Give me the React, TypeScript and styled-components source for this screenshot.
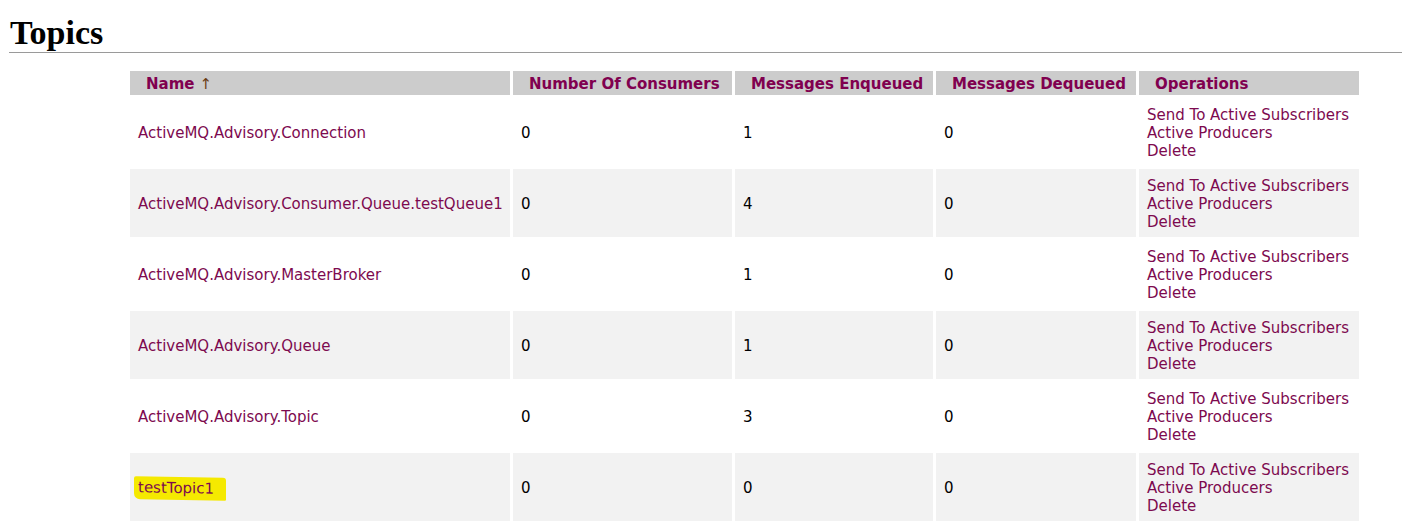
import React from "react";
import styled, { createGlobalStyle } from "styled-components";

type Topic = {
  name: string;
  consumers: number;
  enqueued: number;
  dequeued: number;
  marked?: boolean;
};

const topics: Topic[] = [
  { name: "ActiveMQ.Advisory.Connection", consumers: 0, enqueued: 1, dequeued: 0 },
  { name: "ActiveMQ.Advisory.Consumer.Queue.testQueue1", consumers: 0, enqueued: 4, dequeued: 0 },
  { name: "ActiveMQ.Advisory.MasterBroker", consumers: 0, enqueued: 1, dequeued: 0 },
  { name: "ActiveMQ.Advisory.Queue", consumers: 0, enqueued: 1, dequeued: 0 },
  { name: "ActiveMQ.Advisory.Topic", consumers: 0, enqueued: 3, dequeued: 0 },
  { name: "testTopic1", consumers: 0, enqueued: 0, dequeued: 0, marked: true },
];

const operations = ["Send To Active Subscribers", "Active Producers", "Delete"];

const App: React.FC = () => {
  return (
    <Page>
      <GlobalStyle />
      <Title>Topics</Title>
      <Table>
        <HeadRow>
          <HeadCell>
            Name <SortArrow>↑</SortArrow>
          </HeadCell>
          <HeadCell>Number Of Consumers</HeadCell>
          <HeadCell>Messages Enqueued</HeadCell>
          <HeadCell>Messages Dequeued</HeadCell>
          <HeadCell>Operations</HeadCell>
        </HeadRow>
        {topics.map((t, i) => (
          <Row key={t.name} $shaded={i % 2 === 1}>
            <Cell>
              {t.marked ? (
                <Marker>
                  <TopicLink>{t.name}</TopicLink>
                </Marker>
              ) : (
                <TopicLink>{t.name}</TopicLink>
              )}
            </Cell>
            <Cell>{t.consumers}</Cell>
            <Cell>{t.enqueued}</Cell>
            <Cell>{t.dequeued}</Cell>
            <OpsCell>
              {operations.map((op) => (
                <TopicLink key={op}>{op}</TopicLink>
              ))}
            </OpsCell>
          </Row>
        ))}
      </Table>
    </Page>
  );
};

export default App;

// ------------------ Styled Components ------------------

const GlobalStyle = createGlobalStyle`
  html, body {
    margin: 0;
    padding: 0;
    background: #ffffff;
  }
`;

const Page = styled.div`
  width: 1402px;
  height: 532px;
  overflow: hidden;
  padding: 0 0 0 9px;
  box-sizing: border-box;
  font-family: "DejaVu Sans", Verdana, sans-serif;
`;

const Title = styled.h2`
  margin: 14px 0 0 0;
  padding: 0 0 0 1px;
  font-family: "Liberation Serif", "Times New Roman", serif;
  font-size: 34px;
  font-weight: 700;
  line-height: 38px;
  color: #000000;
  border-bottom: 1px solid #9a9a9a;
`;

const Table = styled.div`
  display: flex;
  flex-direction: column;
  gap: 3px;
  margin: 18px 0 0 121px;
  width: 1229px;
`;

const columns = "380px 219px 198px 200px 220px";

const HeadRow = styled.div`
  display: grid;
  grid-template-columns: ${columns};
  column-gap: 3px;
  height: 24px;
`;

const HeadCell = styled.div`
  display: flex;
  align-items: center;
  gap: 5px;
  padding: 2px 0 0 16px;
  background: #cccccc;
  color: #80004f;
  font-size: 15px;
  font-weight: 700;
  white-space: nowrap;
`;

const SortArrow = styled.span`
  font-weight: 400;
  color: #6a3a14;
`;

const Row = styled.div<{ $shaded: boolean }>`
  display: grid;
  grid-template-columns: ${columns};
  column-gap: 3px;
  height: 68px;

  & > div {
    background: ${({ $shaded }) => ($shaded ? "#f2f2f2" : "#ffffff")};
  }
`;

const Cell = styled.div`
  display: flex;
  align-items: center;
  padding: 2px 0 0 8px;
  font-size: 15px;
  line-height: 18px;
  color: #000000;
  white-space: nowrap;
`;

const OpsCell = styled(Cell)`
  flex-direction: column;
  align-items: flex-start;
  justify-content: center;
`;

const TopicLink = styled.span`
  color: #7d0a4f;
  font-size: 15px;
  line-height: 18px;
  cursor: pointer;
`;

const Marker = styled.span`
  display: inline-block;
  margin-left: -4px;
  padding: 2px 12px 3px 4px;
  background: #f5e900;
  border-radius: 2px 3px 1px 6px;
  transform: skewY(1deg);
`;
